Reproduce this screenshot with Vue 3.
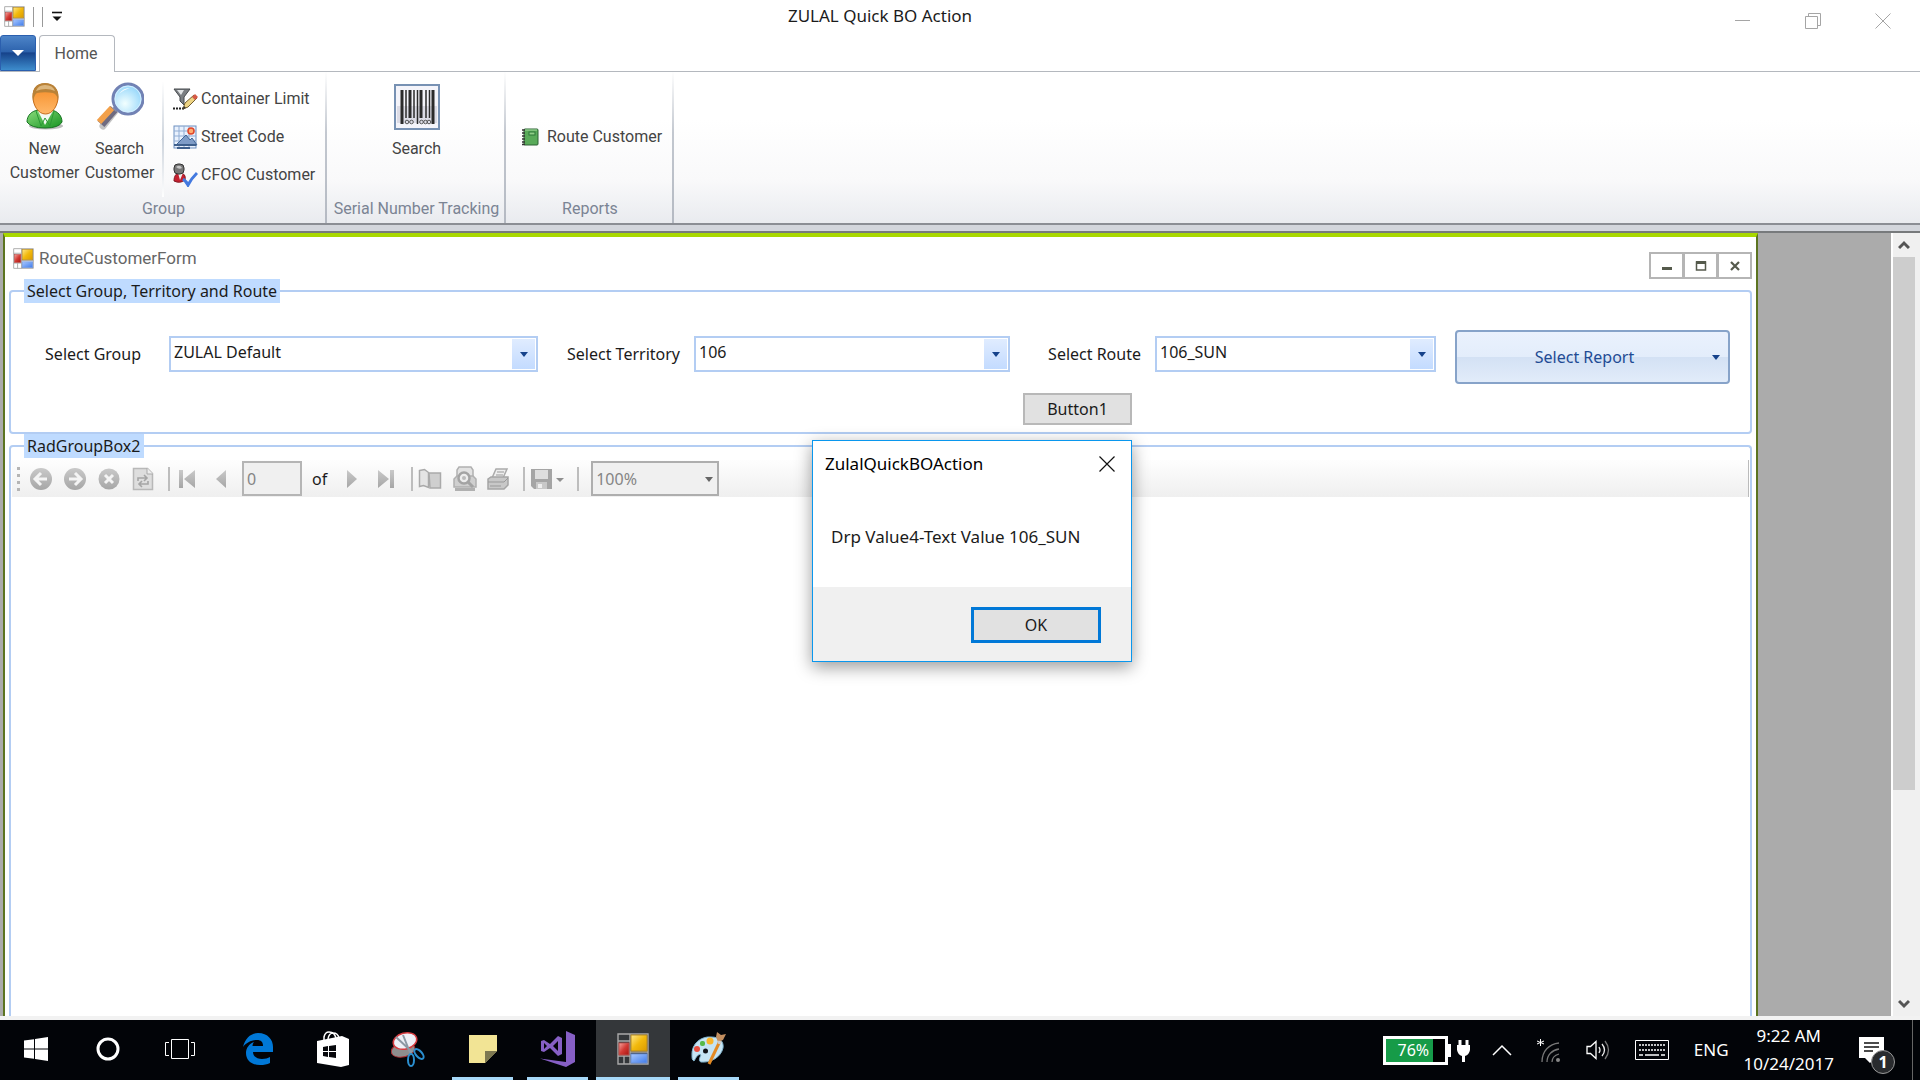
<template>
  <div class="desktop">
    <svg class="sprite" aria-hidden="true">
      <defs>
        <linearGradient id="gold" x1="0" y1="0" x2="1" y2="1">
          <stop offset="0" stop-color="#ffe88a" /><stop offset="0.5" stop-color="#f2b90c" /><stop offset="1" stop-color="#d99a00" />
        </linearGradient>
        <linearGradient id="red" x1="0" y1="0" x2="1" y2="1">
          <stop offset="0" stop-color="#f7a6a0" /><stop offset="0.5" stop-color="#d33a34" /><stop offset="1" stop-color="#a81410" />
        </linearGradient>
        <linearGradient id="blue" x1="0" y1="0" x2="1" y2="1">
          <stop offset="0" stop-color="#a9c8ff" /><stop offset="1" stop-color="#3f7bea" />
        </linearGradient>
        <linearGradient id="grey" x1="0" y1="0" x2="0" y2="1">
          <stop offset="0" stop-color="#c9c9c9" /><stop offset="1" stop-color="#a6a6a6" />
        </linearGradient>
      </defs>
      <symbol id="winform" viewBox="0 0 32 32">
        <path d="M1 1h30v30H1zM13 1v30M1 8h12M1 23h12M7 23v8M13 19h18" fill="none" stroke="#a9a9a9" stroke-width="1.4" />
        <rect x="14" y="2" width="16" height="16" fill="url(#gold)" stroke="#b58a20" />
        <rect x="2" y="10" width="10" height="12" fill="url(#red)" stroke="#b8504c" />
        <rect x="14" y="21" width="16" height="9" fill="url(#blue)" stroke="#6e93d8" />
      </symbol>
    </svg>

    <header class="titlebar">
      <div class="quick">
        <svg class="form-icon"><use href="#winform" /></svg>
        <i></i><i></i>
        <button class="plain" aria-label="Customize toolbar">
          <svg width="12" height="12" viewBox="0 0 12 12"><path d="M1 1.500h10" stroke="#111" stroke-width="1.600" /><path d="M1.500 5.500h9L6 10z" fill="#111" /></svg>
        </button>
      </div>
      <h1>ZULAL Quick BO Action</h1>
      <div class="caption-buttons">
        <button class="plain" aria-label="Minimize"><svg width="16" height="16"><path d="M0 7.500h15" stroke="#a5a5a5" /></svg></button>
        <button class="plain" aria-label="Restore"><svg width="16" height="16"><path d="M.5 3.500h12v12H.5zM3.500 3.500v-3h12v12h-3" fill="none" stroke="#a5a5a5" /></svg></button>
        <button class="plain" aria-label="Close"><svg width="16" height="16"><path d="M.5.5l15 15M15.500.5l-15 15" stroke="#a5a5a5" /></svg></button>
      </div>
    </header>

    <nav class="tabs">
      <button class="app-menu" aria-label="Application menu">
        <svg width="12" height="8"><path d="M0 1h12L6 7z" fill="#fff" /></svg>
      </button>
      <button class="tab">Home</button>
    </nav>

    <section class="ribbon">
      <div class="ribbon-group customers">
        <div class="group-body">
          <button class="big">
            <svg width="38" height="48" viewBox="0 0 38 48">
              <defs>
                <linearGradient id="face" x1="0" y1="0" x2="0" y2="1"><stop offset="0" stop-color="#f58a24" /><stop offset="1" stop-color="#ffb869" /></linearGradient>
                <linearGradient id="shirt" x1="0" y1="0" x2="1" y2="1"><stop offset="0" stop-color="#8bdc7c" /><stop offset="1" stop-color="#159321" /></linearGradient>
              </defs>
              <ellipse cx="20" cy="44" rx="17" ry="3.500" fill="#8f8f8f" opacity="0.600" />
              <path d="M1 40C1 33 6 29 12 28h13c7 1 11 6 11 12q-3 6-17 6T1 40z" fill="url(#shirt)" stroke="#177422" />
              <path d="M12 29l7 14 8-14z" fill="#f3f9f3" />
              <path d="M10 29l5 15 4-8M28 29l-4 15-5-8" fill="none" stroke="#2b9a35" />
              <path d="M7 15C7 5 12 2 19 2s13 4 13 13c0 8-5 17-12.500 17S7 23 7 15z" fill="url(#face)" stroke="#c56b18" />
              <path d="M7 19C5 7 10 1 19 1s15 6 13 18c0-4-2-7-5-8-5-1-11-1-16 0-2 1-3 4-4 8z" fill="#b98238" />
              <path d="M10 9q2-6 9-6 8 0 10 6-9-4-19 0z" fill="#dcb67d" />
            </svg>
            <span>New<br />Customer</span>
          </button>
          <button class="big">
            <svg width="48" height="48" viewBox="0 0 48 48">
              <defs>
                <radialGradient id="lens" cx="0.400" cy="0.650" r="0.700"><stop offset="0" stop-color="#f2ffff" /><stop offset="1" stop-color="#8bd2fa" /></radialGradient>
              </defs>
              <path d="M19 29L7 44" stroke="#8a8a8a" stroke-width="7" stroke-linecap="round" opacity="0.500" />
              <path d="M18 27L5 42" stroke="#6f6b80" stroke-width="9" />
              <path d="M16 26L3 40" stroke="#f2a04a" stroke-width="6" />
              <path d="M22 24l-4 4" stroke="#8c8fa8" stroke-width="5" />
              <circle cx="32" cy="17" r="15" fill="url(#lens)" stroke="#7282b4" stroke-width="3" />
              <circle cx="32" cy="17" r="13" fill="none" stroke="#d5efff" />
              <path d="M23 12q4-6 11-6-7 2-11 6z" fill="#fff" />
            </svg>
            <span>Search<br />Customer</span>
          </button>
          <div class="small-list">
            <button>
              <svg width="25" height="24" viewBox="0 0 25 24">
                <path d="M1 2h16l-6 8v8l-4-4v-4z" fill="#7b7f83" stroke="#45494d" /><path d="M4 3h7l-3 5z" fill="#e2e5e7" />
                <path d="M0 21.500h11" stroke="#222" stroke-width="2" stroke-dasharray="2 1" />
                <path d="M10 22l2-6 9-8 3 3-9 9z" fill="#eed483" stroke="#725d30" /><path d="M19 10l3-3 3 3-3 3z" fill="#d65a47" /><path d="M10 22l1-3 2 2z" fill="#333" />
              </svg>Container Limit
            </button>
            <button>
              <svg width="25" height="24" viewBox="0 0 25 24">
                <rect x="1" y="1" width="22" height="22" fill="#e9f1fd" stroke="#6d8fc0" /><path d="M6 1v22M11 1v22M16 1v22M1 6h22M1 11h22M1 16h22" stroke="#91add4" />
                <path d="M3 20l10-10 4 5 2-2 5 7z" fill="#7f9cc7" stroke="#416596" /><circle cx="18" cy="6" r="3" fill="#ffad70" stroke="#e0462b" stroke-width="1.500" /><path d="M1 20h22M4 23h13" stroke="#3f608d" stroke-width="2" />
              </svg>Street Code
            </button>
            <button>
              <svg width="25" height="24" viewBox="0 0 25 24">
                <path d="M1 18c0-5 2-8 6-8s6 3 5 7q-5 4-11 1z" fill="#c5202f" stroke="#821622" /><path d="M5 10l2 7 3-7z" fill="#eee" />
                <rect x="1" y="1" width="10" height="10" rx="4" fill="#777" stroke="#333" /><path d="M3 4q4-3 6 1-3 2-6-1z" fill="#c6c6c6" />
                <path d="M10 16q3 2 5 6 3-6 9-12" fill="none" stroke="#4379df" stroke-width="3" />
              </svg>CFOC Customer
            </button>
          </div>
        </div>
        <div class="group-name">Group</div>
      </div>
      <div class="ribbon-group tracking">
        <div class="group-body">
          <button class="big">
            <svg width="46" height="46" viewBox="0 0 46 46">
              <rect x="1" y="1" width="44" height="44" fill="#f4f4fa" stroke="#7791b3" stroke-width="2" /><rect x="3" y="22" width="40" height="17" fill="#dcdce6" />
              <path d="M8 6v34M39 6v34" stroke="#2b2b2b" stroke-width="3" />
              <path d="M16 6v28M27 6v28" stroke="#2b2b2b" stroke-width="3" /><path d="M12 6v28M20 6v28M23.500 6v34M32 6v28M35.500 6v28" stroke="#2b2b2b" stroke-width="1.500" />
              <g fill="none" stroke="#555"><circle cx="13" cy="38" r="1.800" /><circle cx="17.500" cy="38" r="1.800" /><circle cx="27.500" cy="38" r="1.800" /><circle cx="31.500" cy="38" r="1.800" /><circle cx="35" cy="38" r="1.800" /></g>
            </svg>
            <span>Search</span>
          </button>
        </div>
        <div class="group-name">Serial Number Tracking</div>
      </div>
      <div class="ribbon-group reports">
        <div class="group-body">
          <button class="route">
            <svg width="18" height="18" viewBox="0 0 18 18">
              <rect x="3" y="1" width="14" height="16" rx="1" fill="#59aa59" stroke="#2d6334" /><path d="M4 2h12" stroke="#a5dba0" /><rect x="8" y="4" width="6" height="3" fill="#91cf88" stroke="#2d7738" />
              <path d="M1 2h3M1 5h3M1 8h3M1 11h3M1 14h3M1 16.500h3" stroke="#333" stroke-width="1.300" />
            </svg>Route Customer
          </button>
        </div>
        <div class="group-name">Reports</div>
      </div>
    </section>

    <main class="mdi">
      <section class="child">
        <div class="child-title">
          <svg class="form-icon"><use href="#winform" /></svg>
          <h2>RouteCustomerForm</h2>
          <div class="child-buttons">
            <button aria-label="Minimize"><svg width="12" height="12"><path d="M1 8.500h10" stroke="#555a4c" stroke-width="3" /></svg></button>
            <button aria-label="Maximize"><svg width="12" height="12"><path d="M1.500 2v8h9V2z" fill="none" stroke="#555a4c" stroke-width="1.500" /><path d="M1 2.500h10" stroke="#555a4c" stroke-width="3" /></svg></button>
            <button aria-label="Close"><svg width="12" height="12"><path d="M2 2l8 8M10 2l-8 8" stroke="#555a4c" stroke-width="2.200" /></svg></button>
          </div>
        </div>

        <fieldset class="filters">
          <legend>Select Group, Territory and Route</legend>
          <div class="filter-grid">
            <template v-for="field in fields" :key="field.id">
              <label :for="field.id">{{ field.label }}</label>
              <div class="combo">
                <select :id="field.id" v-model="field.value">
                  <option>{{ field.value }}</option>
                </select>
                <span class="combo-arrow"><svg width="8" height="5"><path d="M0 0h8L4 5z" fill="#15428b" /></svg></span>
              </div>
            </template>
            <button class="report-button"><span>Select Report</span><svg width="8" height="5"><path d="M0 0h8L4 5z" fill="#15428b" /></svg></button>
            <button class="button1" @click="dialogOpen = true">Button1</button>
          </div>
        </fieldset>

        <fieldset class="viewer">
          <legend>RadGroupBox2</legend>
          <div class="toolbar">
            <span class="grip"></span>
            <button disabled aria-label="Back"><svg width="24" height="24"><circle cx="12" cy="12" r="11" fill="url(#grey)" /><path d="M18 12H7M12 6l-6 6 6 6" fill="none" stroke="#f4f4f4" stroke-width="3" /></svg></button>
            <button disabled aria-label="Forward"><svg width="24" height="24"><circle cx="12" cy="12" r="11" fill="url(#grey)" /><path d="M6 12h11M12 6l6 6-6 6" fill="none" stroke="#f4f4f4" stroke-width="3" /></svg></button>
            <button disabled aria-label="Stop"><svg width="24" height="24"><circle cx="12" cy="12" r="10.500" fill="url(#grey)" /><path d="M8 8l8 8M16 8l-8 8" stroke="#f4f4f4" stroke-width="3" /></svg></button>
            <button disabled aria-label="Refresh"><svg width="24" height="24"><path d="M2.500 1.500h14l5 5v16h-19z" fill="#dedede" stroke="#b8b8b8" stroke-width="1.500" /><path d="M16 1v6h6" fill="#eee" stroke="#aaa" /><path d="M7 14v-3h9M13 8l3 3-3 3M17 14v3H8M11 14l-3 3 3 3" fill="none" stroke="#a5a5a5" stroke-width="1.600" /></svg></button>
            <i></i>
            <button disabled aria-label="First page"><svg width="18" height="20"><path d="M1 1h4v18H1zM17 1v18L6 10z" fill="url(#grey)" /></svg></button>
            <button disabled aria-label="Previous page"><svg width="18" height="20"><path d="M14 1v18L4 10z" fill="url(#grey)" /></svg></button>
            <input class="page" type="text" value="0" disabled aria-label="Current page" />
            <span class="of">of</span>
            <button disabled aria-label="Next page"><svg width="18" height="20"><path d="M4 1v18l10-9z" fill="url(#grey)" /></svg></button>
            <button disabled aria-label="Last page"><svg width="18" height="20"><path d="M13 1h4v18h-4zM1 1v18l11-9z" fill="url(#grey)" /></svg></button>
            <i></i>
            <button disabled aria-label="Document map"><svg width="24" height="24"><path d="M1.500 3.500l5-1 4 3v15l-5-2-4 1z" fill="#e4e4e4" stroke="#aaa" stroke-width="1.500" /><path d="M11 6h11.500v15H12z" fill="#cfcfcf" stroke="#aaa" stroke-width="1.500" /></svg></button>
            <button disabled aria-label="Print layout"><svg width="25" height="26"><path d="M7 1h12l2 3v8H5V4z" fill="#e2e2e2" stroke="#b0b0b0" stroke-width="1.500" /><path d="M2 13l3-3h16l3 3v8H2z" fill="#cfcfcf" stroke="#b0b0b0" stroke-width="1.500" /><path d="M3 22h20v3H3z" fill="#b0b0b0" /><circle cx="12" cy="12" r="5.500" fill="#ececec" stroke="#a3a3a3" stroke-width="2.500" /><circle cx="12" cy="12" r="2" fill="#bbb" /><path d="M16 16l5 5" stroke="#a3a3a3" stroke-width="3" /></svg></button>
            <button disabled aria-label="Print"><svg width="24" height="24"><path d="M6 11L10 2h11l-4 9z" fill="#eee" stroke="#aaa" stroke-width="1.500" /><path d="M2 12l3-2h17v8l-4 4H2z" fill="#c8c8c8" stroke="#a5a5a5" stroke-width="1.500" /><path d="M2 15h16l4-4M4 19h11M11 5h7M10 8h7" stroke="#999" fill="none" /></svg></button>
            <i></i>
            <button class="save" disabled aria-label="Export"><svg width="34" height="24"><path d="M1 2h21v20H4l-3-3z" fill="#a5a5a5" /><path d="M5 3h13v9H5z" fill="#dedede" /><path d="M6 15h11v7H6z" fill="#c8c8c8" /><path d="M8 17h4v4H8z" fill="#eee" /><path d="M26 11h8l-4 4z" fill="#8f8f8f" /></svg></button>
            <i></i>
            <div class="zoom">
              <select disabled aria-label="Zoom"><option>100%</option></select>
              <svg width="8" height="5"><path d="M0 0h8L4 5z" fill="#666" /></svg>
            </div>
          </div>
        </fieldset>
      </section>

      <div class="scrollbar">
        <svg width="12" height="24"><path d="M1 15l5-5 5 5" fill="none" stroke="#555" stroke-width="3" /></svg>
        <div class="track"><div class="thumb"></div></div>
        <svg width="12" height="24"><path d="M1 9l5 5 5-5" fill="none" stroke="#555" stroke-width="3" /></svg>
      </div>
    </main>

    <footer class="taskbar">
      <div class="launchers">
        <button aria-label="Start"><svg width="24" height="24"><path d="M0 3.500l10-1.300v9.300H0zM11 2l13-2v11.500H11zM0 12.500h10v9.300L0 20.500zM11 12.500h13V24l-13-2z" fill="#fff" /></svg></button>
        <button aria-label="Cortana"><svg width="24" height="24"><circle cx="12" cy="12" r="10" fill="none" stroke="#fff" stroke-width="3" /></svg></button>
        <button class="task-view" aria-label="Task view"><svg width="30" height="20"><path d="M6.500.5h17v19h-17zM4 3.500H.5v13H4M26 3.500h3.500v13H26" fill="none" stroke="#fff" /></svg></button>
        <button class="pinned" aria-label="Edge"><svg width="30" height="32" viewBox="0 0 30 32"><path d="M0 14C2 5 8 0 15 0c10 0 15 7 15 14v5H10c0 5 5 7 9 7 3 0 6-1 8-2v6c-3 1.500-6 2-10 2C8 32 3 27 3 20c0-5 3-9 8-11-1 1-1.500 3-1.500 4H20c0-4-2-6-6-6C8 7 3 10 0 14z" fill="#0078d7" /></svg></button>
        <button class="pinned" aria-label="Store"><svg width="32" height="36" viewBox="0 0 32 36"><path d="M0 10l25-5 7 3v26l-8 2-24-4z" fill="#fff" /><path d="M7 9V6q1-5 5-5 6 0 7 7M11 8q1-6 5-6 5 0 6 5" fill="none" stroke="#fff" stroke-width="1.500" /><path d="M6 16l5-1v5H6zM12 15l7-1v6h-7zM6 21h5v5l-5-1zM12 21h7v6l-7-1z" fill="#06070b" /></svg></button>
        <button class="pinned" aria-label="Snipping Tool"><svg width="34" height="36" viewBox="0 0 34 36">
          <ellipse cx="12" cy="19" rx="12" ry="7" fill="#8e8e8e" stroke="#b02c30" transform="rotate(-12 12 19)" /><ellipse cx="14" cy="10" rx="12" ry="8" fill="#eef0f7" stroke="#d53b3f" stroke-width="1.500" transform="rotate(-15 14 10)" />
          <path d="M5 6l16 15M12 4l8 20" stroke="#8c98a4" stroke-width="2" /><ellipse cx="20" cy="29" rx="3" ry="6" fill="none" stroke="#2a8fd0" stroke-width="2" /><ellipse cx="28" cy="23" rx="3" ry="6" fill="none" stroke="#2a8fd0" stroke-width="2" transform="rotate(-42 28 23)" />
        </svg></button>
        <button class="pinned running" aria-label="Sticky Notes"><svg width="28" height="28"><path d="M0 0h28v16L16 28H0z" fill="#f2e495" /><path d="M16 28V16h12z" fill="#7d7851" /></svg></button>
        <button class="pinned running" aria-label="Visual Studio"><svg width="36" height="36"><path d="M26 0l9 4v27l-9 5L0 27.500l26 3.500z" fill="#865fc5" /><path d="M1 10l3-1 6 4 8-8 4 2v16l-4 2-8-8-6 4-3-1zM4 12v6l3-3zM18 10l-5 5 5 5z" fill="#865fc5" fill-rule="evenodd" /></svg></button>
        <button class="active" aria-label="ZULAL Quick BO Action"><svg width="32" height="32"><use href="#winform" /></svg></button>
        <button class="pinned running" aria-label="Paint"><svg width="36" height="36" viewBox="0 0 36 36">
          <path d="M1 25C0 12 11 5 20 6c9 0 13 5 12 11-2 9-12 15-22 14-3-1-1-5 0-7-3-2-5 3-7 6-2-1-2-3-2-5z" fill="#c5e4f4" stroke="#82b5ce" /><circle cx="14.500" cy="20" r="2.500" fill="#101318" />
          <circle cx="6" cy="18" r="3" fill="#e84d3f" /><rect x="9" y="10" width="5" height="5" rx="2" fill="#56b948" /><circle cx="19" cy="10" r="3.500" fill="#fab52b" />
          <path d="M29 10L18 33" stroke="#e38a24" stroke-width="3" /><path d="M26 1l4 3 5-1-3 6-5 2-2-5z" fill="#c28e5f" /><path d="M27 11l3 1" stroke="#ccc" stroke-width="3" />
        </svg></button>
      </div>

      <div class="tray">
        <div class="battery"><span>76%</span></div>
        <svg class="plug" width="14" height="24"><path d="M3 2v6M10 2v6" stroke="#fff" stroke-width="3" /><path d="M0 7h13v5q-1 5-5 6v6H5v-6q-4-1-5-6z" fill="#fff" /></svg>
        <svg width="20" height="12"><path d="M1 11l9-9 9 9" fill="none" stroke="#fff" stroke-width="1.500" /></svg>
        <svg width="24" height="24"><path d="M3.500 1v7M0 3l7 3M7 3L0 6" stroke="#fff" /><path d="M5 24C5 13 12 6 22 5M10 24c0-7 5-12 12-13M15 24q0-6 7-8" fill="none" stroke="#777" stroke-width="1.300" /><circle cx="21" cy="22" r="2" fill="#888" /></svg>
        <svg width="24" height="20"><path d="M1 6.500h3.500L10 1.500v17L4.500 13.500H1z" fill="none" stroke="#fff" stroke-width="1.300" /><path d="M13 7q2 3 0 6M16 4q5 6 0 12" fill="none" stroke="#eee" stroke-width="1.300" /><path d="M19 1q7 9 0 18" fill="none" stroke="#777" stroke-width="1.300" /></svg>
        <svg width="34" height="20"><path d="M.5.5h33v19H.5z" fill="none" stroke="#fff" /><path d="M4 5h26M4 10h26" stroke="#fff" stroke-width="1.500" stroke-dasharray="2 1" /><path d="M4 15h4M10 15h14M26 15h4" stroke="#fff" stroke-width="1.500" /></svg>
        <span class="lang">ENG</span>
        <div class="clock"><span>9:22 AM</span><span>10/24/2017</span></div>
        <div class="notice">
          <svg width="26" height="26"><path d="M0 0h25v21H16l-5 5-5-5H0z" fill="#fff" /><path d="M5 6h15M5 10h15M5 14h9" stroke="#111" stroke-width="1.500" /></svg>
          <b>1</b>
        </div>
      </div>
    </footer>

    <div v-if="dialogOpen" class="dialog" role="dialog" aria-labelledby="dialog-title">
      <div class="dialog-head">
        <span id="dialog-title">ZulalQuickBOAction</span>
        <button class="plain" aria-label="Close" @click="dialogOpen = false"><svg width="16" height="16"><path d="M.5.5l15 15M15.500.5l-15 15" stroke="#111" stroke-width="1.200" /></svg></button>
      </div>
      <p>Drp Value4-Text Value 106_SUN</p>
      <div class="dialog-foot"><button @click="dialogOpen = false">OK</button></div>
    </div>
  </div>
</template>

<script setup>
import { reactive, ref } from 'vue'

const dialogOpen = ref(true)

const fields = reactive([
  { id: 'group', label: 'Select Group', value: 'ZULAL Default' },
  { id: 'territory', label: 'Select Territory', value: '106' },
  { id: 'route', label: 'Select Route', value: '106_SUN' }
])
</script>

<style>
body {
  margin: 0;
}
</style>

<style scoped>
.desktop {
  position: relative;
  display: flex;
  flex-direction: column;
  height: 100vh;
  overflow: hidden;
  background: #fff;
  color: #1b1b1b;
  font: 16px/24px "Noto Sans", "Open Sans", sans-serif;
}

.desktop * {
  box-sizing: border-box;
}

.sprite {
  position: absolute;
  width: 0;
  height: 0;
}

button,
input,
select {
  font: inherit;
  color: inherit;
  padding: 0;
}

svg {
  display: block;
  flex: none;
}

.plain {
  border: 0;
  background: none;
}

.form-icon {
  width: 21px;
  height: 21px;
  background: #fff;
}

.titlebar {
  display: grid;
  grid-template-columns: 1fr auto 1fr;
  height: 35px;
}

.quick {
  display: flex;
  align-items: center;
  gap: 8px;
  padding: 0 0 2px 4px;
}

.quick i {
  width: 1px;
  height: 20px;
  background: #999;
}

.titlebar h1 {
  margin: 0 160px 0 0;
  font-size: 17px;
  font-weight: 400;
  line-height: 32px;
}

.caption-buttons {
  display: flex;
  gap: 54px;
  justify-content: flex-end;
  padding: 7px 29px 0 0;
}

.tabs {
  display: flex;
  height: 37px;
  border-bottom: 1px solid #b4b8be;
}

.app-menu {
  display: flex;
  align-items: center;
  justify-content: center;
  width: 36px;
  height: 36px;
  margin-right: 3px;
  border: 1px solid #2b5fae;
  border-radius: 3px 3px 0 0;
  background: linear-gradient(#4d84c8, #2d63ad 46%, #16438b 50%, #3d8ccc);
}

.tab {
  width: 76px;
  height: 37px;
  padding-right: 2px;
  border: 1px solid #b4b8be;
  border-bottom: 0;
  border-radius: 4px 4px 0 0;
  background: #fff;
  color: #555;
  font: 16px/24px Roboto, sans-serif;
}

.ribbon {
  display: flex;
  height: 161px;
  border-bottom: 2px solid #777a7c;
  background: linear-gradient(#fff 30%, #f9f9fa 68%, #e9ebef 151px, #8b8e94 151px, #8b8e94 153px, #d3d6dc 153px);
  font: 16px/24px Roboto, sans-serif;
  color: #444;
}

.ribbon-group {
  display: flex;
  flex-direction: column;
  height: 151px;
  padding-top: 10px;
  border-right: 2px solid;
  border-image: linear-gradient(#fff, #c3c8d0 40%, #b4b9c2) 1;
}

.customers {
  width: 327px;
}

.tracking {
  width: 179px;
}

.reports {
  width: 168px;
}

.group-body {
  display: flex;
  flex: 1;
  justify-content: center;
}

.group-name {
  height: 26px;
  padding-left: 2px;
  color: #7b8494;
  text-align: center;
  white-space: nowrap;
}

.ribbon button {
  border: 0;
  background: none;
}

.big {
  display: flex;
  flex-direction: column;
  align-items: center;
  width: 75px;
}

.big svg {
  margin-bottom: 7px;
}

.tracking .big svg {
  margin: 2px 0 7px;
}

.tracking .group-body {
  padding-left: 2px;
}

.customers .group-body {
  justify-content: flex-start;
  padding-left: 7px;
}

.small-list {
  display: flex;
  flex-direction: column;
  gap: 14px;
  margin-left: 5px;
  padding: 5px 0 0 9px;
  border-left: 2px solid;
  border-image: linear-gradient(#fff, #ccd3dc, #fff) 1;
}

.small-list button,
.route {
  display: flex;
  align-items: center;
  gap: 3px;
  white-space: nowrap;
}

.route {
  gap: 8px;
  height: 110px;
  padding-left: 5px;
}

.mdi {
  display: flex;
  flex: 1;
  min-height: 0;
  padding-left: 3px;
  border-bottom: 4px solid #f2f2f2;
  background: #ababab;
}

.child {
  display: flex;
  flex: 1;
  flex-direction: column;
  margin-right: 133px;
  padding: 0 4px 0 4px;
  border: 2px solid #5c7420;
  border-top: 4px solid #a9d800;
  border-bottom: 0;
  background: #fff;
}

.child-title {
  display: flex;
  align-items: center;
  gap: 5px;
  height: 42px;
  padding-left: 4px;
}

.child-title h2 {
  flex: 1;
  margin: 0;
  color: #666;
  font: 400 17px/24px Roboto, sans-serif;
}

.child-buttons {
  display: flex;
  padding-top: 15px;
}

.child-buttons button {
  display: flex;
  align-items: center;
  justify-content: center;
  width: 35px;
  height: 27px;
  border: 2px solid #b5b5b5;
  margin-left: -1px;
  background: #fff;
}

fieldset {
  min-width: 0;
  margin: 0;
  padding: 0;
  border: 2px solid #b3cdf3;
  border-radius: 4px;
}

legend {
  margin-left: 13px;
  padding: 0 3px;
  background: #bfdbff;
}

.filters {
  height: 155px;
}

.filter-grid {
  display: grid;
  grid-template-columns: 158px 369fr 156px 316fr 145px 281fr 294px;
  grid-template-rows: 54px 32px;
  row-gap: 9px;
  align-items: start;
  padding: 27px 20px 0 0;
}

.filter-grid label {
  margin-top: 6px;
  padding-right: 14px;
  line-height: 36px;
  text-align: right;
}

.filter-grid label:first-child {
  padding-right: 28px;
}

.combo {
  position: relative;
  margin-top: 6px;
}

.combo select {
  width: 100%;
  height: 36px;
  padding: 0 30px 4px 3px;
  border: 2px solid #b3cdf3;
  border-radius: 0;
  appearance: none;
  background: #fff;
}

.combo-arrow {
  position: absolute;
  top: 3px;
  right: 3px;
  bottom: 3px;
  display: flex;
  align-items: center;
  justify-content: center;
  width: 23px;
  background: linear-gradient(#e0ecff, #c3dbff);
  pointer-events: none;
}

.report-button {
  display: flex;
  align-items: center;
  height: 54px;
  margin-left: 19px;
  padding-right: 8px;
  border: 2px solid #87a3c9;
  border-radius: 4px;
  background: linear-gradient(#eaf1fd, #e3edfb 49%, #d3e1f4 50%, #e2ecfa);
  color: #1f4b94;
}

.report-button span {
  flex: 1;
}

.button1 {
  grid-column: 5;
  height: 32px;
  margin: 0 23px 0 13px;
  border: 2px solid #b8b8b8;
  background: #e1e1e1;
}

.viewer {
  flex: 1;
  border-bottom: 0;
  border-radius: 4px 4px 0 0;
}

.toolbar {
  display: flex;
  align-items: center;
  height: 37px;
  margin: 2px 1px 0;
  border-right: 1px solid #bbb;
  background: linear-gradient(#fefefe, #efefef);
}

.toolbar > button {
  display: flex;
  align-items: center;
  justify-content: center;
  width: 34px;
  border: 0;
  background: none;
}

.toolbar i {
  width: 2px;
  height: 24px;
  margin-left: 8px;
  background: #bdbdbd;
}

.toolbar .save {
  width: 44px;
}

.grip {
  width: 3px;
  height: 24px;
  margin: 0 4px 0 5px;
  background: repeating-linear-gradient(#b5b5b5 0 3px, transparent 3px 7px);
}

.page {
  width: 60px;
  height: 35px;
  margin: 0 10px 0 4px;
  padding-left: 3px;
  border: 2px solid #b5b5b5;
  background: #f0f0f0;
  color: #858585;
}

.of {
  margin-right: 8px;
}

.zoom {
  position: relative;
  width: 128px;
  margin-left: 12px;
}

.zoom select {
  display: block;
  width: 100%;
  height: 35px;
  padding-left: 3px;
  border: 2px solid #aeaeae;
  border-radius: 0;
  appearance: none;
  background: #f0f0f0;
  color: #858585;
  opacity: 1;
}

.zoom svg {
  position: absolute;
  top: 16px;
  right: 6px;
  pointer-events: none;
}

.scrollbar {
  display: flex;
  flex-direction: column;
  align-items: center;
  width: 29px;
  padding-right: 5px;
  border-left: 2px solid #fff;
  background: #f0f0f0;
}

.track {
  flex: 1;
  width: 22px;
}

.thumb {
  height: 72.5%;
  background: #cdcdcd;
}

.taskbar {
  display: flex;
  justify-content: space-between;
  height: 60px;
  background: #020408;
  color: #fff;
}

.launchers,
.tray {
  display: flex;
  align-items: center;
}

.launchers button {
  display: flex;
  align-items: center;
  justify-content: center;
  width: 72px;
  height: 60px;
  border: 0;
  border-bottom: 3px solid transparent;
  background: none;
}

.launchers .task-view {
  margin-right: 4px;
}

.launchers .pinned {
  width: 61px;
  margin: 0 7px;
}

.launchers .running {
  border-color: #a6d8f8;
}

.launchers .active {
  width: 74px;
  margin: 0 1px;
  border-color: #a6d8f8;
  background: #34373a;
}

.tray {
  gap: 25px;
  padding-right: 7px;
}

.battery {
  position: relative;
  width: 65px;
  height: 29px;
  margin-right: -16px;
  border: 3px solid #fff;
  background: linear-gradient(90deg, #169b48 80%, #000 80%);
  line-height: 22px;
  text-align: center;
}

.battery::after {
  content: "";
  position: absolute;
  top: 5px;
  right: -6px;
  width: 3px;
  height: 13px;
  background: #fff;
}

.battery span {
  padding-right: 4px;
}

.plug {
  margin-right: -4px;
}

.lang {
  font-size: 17px;
}

.clock {
  display: flex;
  flex-direction: column;
  margin-left: -10px;
  font-size: 17px;
  line-height: 28px;
  text-align: center;
}

.notice {
  position: relative;
  width: 54px;
  height: 60px;
  padding-top: 17px;
  border-right: 1px solid #666;
}

.notice b {
  position: absolute;
  top: 30px;
  left: 12px;
  width: 24px;
  height: 24px;
  border: 1px solid #999;
  border-radius: 50%;
  background: #292b2e;
  line-height: 22px;
  text-align: center;
}

.dialog {
  position: absolute;
  top: 440px;
  left: calc(50% - 148px);
  width: 320px;
  border: 1px solid #0997ee;
  background: #fff;
  box-shadow: 0 5px 16px rgba(0, 0, 0, 0.4);
  font-size: 17px;
}

.dialog-head {
  display: flex;
  align-items: center;
  justify-content: space-between;
  height: 46px;
  padding: 0 16px 0 12px;
  color: #000;
}

.dialog p {
  height: 100px;
  margin: 0;
  padding: 38px 0 0 18px;
  white-space: nowrap;
}

.dialog-foot {
  display: flex;
  justify-content: flex-end;
  height: 74px;
  padding: 20px 30px 0 0;
  background: #f0f0f0;
}

.dialog-foot button {
  width: 130px;
  height: 36px;
  border: 3px solid #0078d7;
  background: #e1e1e1;
  font-size: 16px;
}
</style>
